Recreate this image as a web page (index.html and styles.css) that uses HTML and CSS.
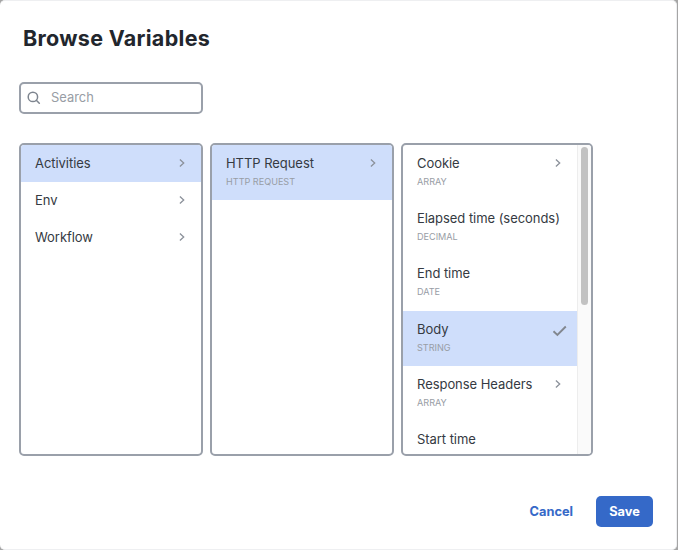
FILE: index.html
```html
<!DOCTYPE html>
<html lang="en">
<head>
<meta charset="utf-8">
<title>Browse Variables</title>
<link rel="stylesheet" href="styles.css">
</head>
<body>
<svg class="symbols" aria-hidden="true">
  <symbol id="chevron" viewBox="0 0 8 10"><path d="M1.9 1.5 5.7 5 1.9 8.5"/></symbol>
  <symbol id="check" viewBox="0 0 16 12"><path d="M1.5 6.3 5.4 10 13.8 1.5"/></symbol>
</svg>
<main class="dialog" role="dialog">
  <h1 class="title">Browse Variables</h1>
  <label class="search">
    <svg class="search-icon" viewBox="0 0 14 14"><circle cx="5.9" cy="5.9" r="4.7"/><path d="m9.3 9.3 3 3"/></svg>
    <span class="placeholder">Search</span>
  </label>
  <div class="columns">
    <ul class="column">
      <li class="row single selected"><span class="name">Activities</span><svg class="chevron"><use href="#chevron"/></svg></li>
      <li class="row single"><span class="name">Env</span><svg class="chevron"><use href="#chevron"/></svg></li>
      <li class="row single"><span class="name">Workflow</span><svg class="chevron"><use href="#chevron"/></svg></li>
    </ul>
    <ul class="column">
      <li class="row selected"><div><span class="name">HTTP Request</span><span class="type">HTTP REQUEST</span></div><svg class="chevron"><use href="#chevron"/></svg></li>
    </ul>
    <div class="column scrolling">
      <ul class="list">
        <li class="row"><div><span class="name">Cookie</span><span class="type">ARRAY</span></div><svg class="chevron"><use href="#chevron"/></svg></li>
        <li class="row"><div><span class="name">Elapsed time (seconds)</span><span class="type">DECIMAL</span></div></li>
        <li class="row"><div><span class="name">End time</span><span class="type">DATE</span></div></li>
        <li class="row selected"><div><span class="name">Body</span><span class="type">STRING</span></div><svg class="check"><use href="#check"/></svg></li>
        <li class="row"><div><span class="name">Response Headers</span><span class="type">ARRAY</span></div><svg class="chevron"><use href="#chevron"/></svg></li>
        <li class="row"><div><span class="name">Start time</span></div></li>
      </ul>
      <div class="track"><div class="thumb"></div></div>
    </div>
  </div>
  <footer class="actions">
    <button class="button">Cancel</button>
    <button class="button primary">Save</button>
  </footer>
</main>
</body>
</html>
```
FILE: styles.css
```css
* { box-sizing: border-box; }
body {
  margin: 0;
  height: 550px;
  overflow: hidden;
  background: #a5a5a5;
  font-family: Inter, sans-serif;
  color: #353a42;
}
.symbols { position: absolute; width: 0; height: 0; }
.dialog {
  width: 677px;
  height: 550px;
  padding: 24px 23px 0 19px;
  background: #fff;
  border: solid #eeeff1;
  border-width: 1px 1px 1px 0;
  border-radius: 5px;
}
.title {
  margin: 0 0 0 4px;
  font-size: 21.5px;
  line-height: 26px;
  font-weight: 700;
  letter-spacing: 0.3px;
  color: #22262d;
}
.search {
  display: flex;
  align-items: center;
  width: 184px;
  height: 32px;
  margin-top: 31px;
  padding-left: 6px;
  border: 2px solid #9aa0aa;
  border-radius: 5px;
}
.search-icon { width: 14px; height: 14px; fill: none; stroke: #7e858f; stroke-width: 1.5; stroke-linecap: round; }
.placeholder { margin-left: 10px; margin-top: -2px; font-size: 12.9px; color: #989da5; }
.columns { display: flex; gap: 7px; margin-top: 29px; }
.column {
  width: 184px;
  height: 313px;
  margin: 0;
  padding: 0;
  list-style: none;
  border: 2px solid #9aa0aa;
  border-radius: 5px;
  overflow: hidden;
}
.scrolling { display: flex; width: 192px; }
.list { width: 175px; margin: 0; padding: 0; list-style: none; }
.row {
  display: flex;
  align-items: flex-start;
  justify-content: space-between;
  height: 55.2px;
  padding: 10px 15px 0 14px;
}
.row.single { height: 36.8px; }
.selected { background: #cfdefb; }
.name { display: block; font-size: 13px; letter-spacing: -0.05px; line-height: 16px; white-space: nowrap; }
.type { display: block; margin-top: 5px; font-size: 9.1px; line-height: 11px; color: #989da5; }
.chevron { flex: none; width: 8px; height: 10px; margin-top: 3px; fill: none; stroke: #8b919a; stroke-width: 1.3; }
.check { flex: none; width: 16px; height: 12px; margin: 4px -6px 0 0; fill: none; stroke: #82878f; stroke-width: 1.9; }
.track { flex: 1; padding: 2px 3px 0; background: #fafafa; border-left: 1px solid #ededed; }
.thumb { width: 7px; height: 158px; border-radius: 4px; background: #c2c2c2; }
.actions { display: flex; justify-content: flex-end; margin-top: 40px; }
.button {
  height: 31px;
  padding: 0 13px;
  border: 0;
  border-radius: 5px;
  background: none;
  font: 700 12.8px Inter, sans-serif;
  color: #3569c8;
}
.primary { width: 57px; margin-left: 10px; background: #3569c8; color: #fff; }
```
